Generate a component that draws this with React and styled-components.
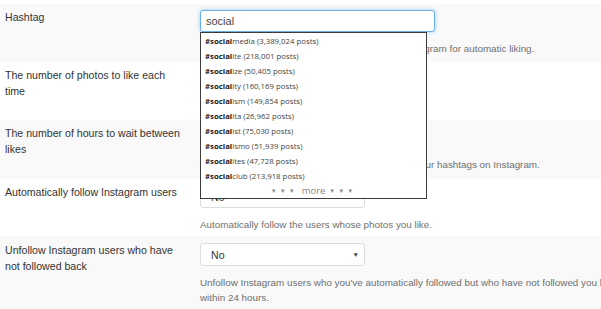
import React from "react";
import styled, { createGlobalStyle } from "styled-components";

const GlobalStyle = createGlobalStyle`
  html, body {
    margin: 0;
    padding: 0;
    background: #fff;
    overflow: hidden;
    font-family: "Liberation Sans", Arial, sans-serif;
  }
`;

const Page = styled.div`
  width: 640px;
  padding-top: 4px;
`;

const Row = styled.div`
  display: grid;
  grid-template-columns: 200px 1fr;
  background: ${(p) => (p.$striped ? "#f9f9f9" : "#fff")};
  height: ${(p) => p.$height || 58}px;
  box-sizing: border-box;
  padding-top: ${(p) => p.$top || 6}px;
`;

const Label = styled.div`
  padding-left: 5px;
  width: 183px;
  font-size: 10.6px;
  line-height: 15.5px;
  color: #333;
`;

const Field = styled.div`
  position: relative;
  display: flex;
  flex-direction: column;
`;

const TextInput = styled.div`
  width: ${(p) => p.$width || 165}px;
  height: 22px;
  box-sizing: border-box;
  border: 1px solid ${(p) => (p.$focus ? "#66afe9" : "#ddd")};
  border-radius: 3px;
  background: #fff;
  box-shadow: ${(p) =>
    p.$focus ? "0 0 4px rgba(102,175,233,.6)" : "inset 0 1px 1px rgba(0,0,0,.075)"};
  padding: 0 5px;
  font-size: 11px;
  line-height: 20px;
  color: #444;
`;

const Select = styled.div`
  width: 165px;
  height: 23px;
  box-sizing: border-box;
  border: 1px solid #ddd;
  border-radius: 3px;
  background: #fff;
  display: flex;
  align-items: center;
  justify-content: space-between;
  padding: 0 5px 0 10px;
  font-size: 10.6px;
  color: #333;
`;

const Caret = styled.span`
  font-size: 6.5px;
  color: #444;
`;

const Help = styled.div`
  margin-top: 9px;
  font-size: 9.85px;
  line-height: 15px;
  color: #6f6f6f;
  white-space: ${(p) => (p.$wrap ? "normal" : "nowrap")};
  width: 430px;
`;

const Suggestions = styled.ul`
  position: absolute;
  top: 22px;
  left: 0;
  width: 227px;
  margin: 0;
  padding: 1px 0 0;
  list-style: none;
  box-sizing: border-box;
  border: 1px solid #3c3c3c;
  background: #fff;
  z-index: 5;
`;

const Suggestion = styled.li`
  height: 15px;
  line-height: 15px;
  padding-left: 4px;
  font-family: "Open Sans", "Liberation Sans", sans-serif;
  font-size: 7.8px;
  color: #444;
  white-space: nowrap;
`;

const Match = styled.b`
  color: #222;
`;

const More = styled.li`
  height: 14px;
  line-height: 14px;
  text-align: center;
  font-family: "Open Sans", "Liberation Sans", sans-serif;
  font-size: 9.5px;
  color: #888;
`;

const Dots = styled.span`
  font-size: 6px;
  letter-spacing: 3px;
  vertical-align: 1px;
  margin: 0 4px;
`;

const hashtags = [
  ["media", "3,389,024"],
  ["ite", "218,001"],
  ["ize", "50,405"],
  ["ity", "160,169"],
  ["ism", "149,854"],
  ["ita", "26,962"],
  ["ist", "75,030"],
  ["ismo", "51,939"],
  ["ites", "47,728"],
  ["club", "213,918"],
];

const App = () => (
  <>
    <GlobalStyle />
    <Page>
      <Row $striped>
        <Label>Hashtag</Label>
        <Field>
          <TextInput $focus $width={235}>social</TextInput>
          <Help>Choose a hashtag that will be searched for on Instagram for automatic liking.</Help>
          <Suggestions>
            {hashtags.map(([rest, count]) => (
              <Suggestion key={rest}>
                <Match>#social</Match>
                {rest} ({count} posts)
              </Suggestion>
            ))}
            <More>
              <Dots>▼▼▼</Dots>more<Dots>▼▼▼</Dots>
            </More>
          </Suggestions>
        </Field>
      </Row>
      <Row>
        <Label>The number of photos to like each time</Label>
        <Field>
          <TextInput>5</TextInput>
          <Help>Between 1 and 10.</Help>
        </Field>
      </Row>
      <Row $striped $height={59}>
        <Label>The number of hours to wait between likes</Label>
        <Field>
          <TextInput>1</TextInput>
          <Help>The hours to wait before liking new photos under your hashtags on Instagram.</Help>
        </Field>
      </Row>
      <Row $height={57}>
        <Label>Automatically follow Instagram users</Label>
        <Field>
          <Select>
            No<Caret>▼</Caret>
          </Select>
          <Help>Automatically follow the users whose photos you like.</Help>
        </Field>
      </Row>
      <Row $striped $height={80} $top={7}>
        <Label>Unfollow Instagram users who have not followed back</Label>
        <Field>
          <Select>
            No<Caret>▼</Caret>
          </Select>
          <Help $wrap>
            Unfollow Instagram users who you've automatically followed but who have not followed you back within 24 hours.
          </Help>
        </Field>
      </Row>
    </Page>
  </>
);

export default App;
